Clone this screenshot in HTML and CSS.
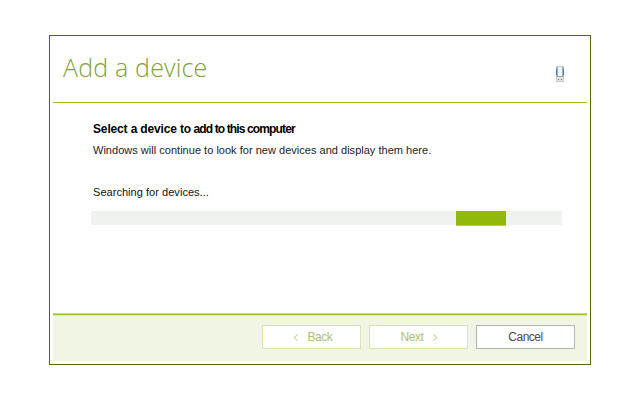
FILE: index.html
```html
<!DOCTYPE html>
<html lang="en">
<head>
<meta charset="utf-8">
<title>Add a device</title>
<link rel="stylesheet" href="styles.css">
</head>
<body>
<main class="dialog">
  <header class="header">
    <h1 class="title">Add a device</h1>
    <svg class="device" width="8" height="16" viewBox="0 0 8 16">
      <rect width="8" height="16" rx="1" fill="#c3c6c8"/>
      <rect y="1" width="8" height="9" fill="#8fb4d2"/>
      <path d="M.5 3v6M7.5 3v6" stroke="#3f80b3"/>
      <rect x="2" y="1" width="4" height="9" fill="#f5f9fc"/>
      <rect y="10" width="8" height="1" fill="#a9a9a9"/>
      <rect x="1" y="11" width="6" height="4" fill="#e6e6e6"/>
      <path d="M2 13.5h1M5 13.5h1" stroke="#666"/>
    </svg>
  </header>
  <section class="content">
    <h2 class="heading"><span class="heading-start">Select a device to</span><span class="heading-end"> add to this computer</span></h2>
    <p class="hint">Windows will continue to look for new devices and display them here.</p>
    <p class="status">Searching for devices...</p>
    <div class="progress"><div class="chunk"></div></div>
  </section>
  <footer class="footer">
    <button class="button" disabled><svg class="chevron" width="5" height="7" viewBox="0 0 5 7"><path d="M4.5.5l-3.5 3 3.5 3"/></svg><span class="back">Back</span></button>
    <button class="button" disabled><span class="next">Next</span><svg class="chevron" width="5" height="7" viewBox="0 0 5 7"><path d="M.5.5l3.5 3-3.5 3"/></svg></button>
    <button class="button cancel"><span>Cancel</span></button>
  </footer>
</main>
</body>
</html>
```
FILE: styles.css
```css
* { box-sizing: border-box; }
body {
  margin: 0;
  padding: 35px 49px;
  background: #fff;
  font-family: "Liberation Sans", Arial, sans-serif;
}
.dialog {
  display: flex;
  flex-direction: column;
  width: 542px;
  height: 330px;
  padding: 3px;
  border: 1px solid #526500;
}
h1, h2, p { margin: 0; white-space: nowrap; }
.header {
  display: flex;
  justify-content: space-between;
  align-items: flex-start;
  height: 64px;
  padding: 11px 23px 0 10px;
  border-bottom: 1px solid #9cc414;
}
.title {
  font: 300 25px/34px "Open Sans", sans-serif;
  letter-spacing: .18px;
  color: #83a233;
}
.device { margin-top: 16px; }
.content {
  display: flex;
  flex-direction: column;
  flex: 1;
  padding: 18px 25px 0 38px;
}
.heading, .hint, .status {
  padding-left: 2px;
  font-size: 11px;
  line-height: 16px;
  color: #222;
}
.heading { font-size: 12px; color: #000; white-space: pre; }
.heading-start { letter-spacing: -.15px; }
.heading-end { letter-spacing: -.87px; }
.hint { margin-top: 5px; letter-spacing: .02px; }
.status { margin-top: 26px; color: #111; letter-spacing: .04px; }
.progress {
  height: 14px;
  margin-top: 11px;
  background: #f0f2ef;
}
.chunk {
  width: 50px;
  height: 14px;
  margin-left: 365px;
  background: #91b90c;
  box-shadow: 0 1px #b6cf62;
}
.footer {
  display: flex;
  justify-content: flex-end;
  align-items: flex-start;
  gap: 8px;
  height: 48px;
  padding: 12px 12px 0 0;
  background: linear-gradient(#c5dc70 0 1px, #a0c51e 1px 2px, #dae7ad 2px 3px, #f1f5e3 3px);
}
.button {
  display: flex;
  justify-content: center;
  align-items: center;
  gap: 10px;
  width: 99px;
  height: 24px;
  padding: 0;
  border: 1px solid #d8e5ae;
  background: #fff;
  font: 12px/16px "Liberation Sans", Arial, sans-serif;
  color: #adbf73;
}
.cancel { border-color: #b2b7ad; color: #4b4b4b; letter-spacing: -.5px; }
.chevron { fill: none; stroke: #b5c67e; }
.back { margin-right: -2px; letter-spacing: -.45px; }
.next { margin-left: 2px; letter-spacing: -.45px; }
```
